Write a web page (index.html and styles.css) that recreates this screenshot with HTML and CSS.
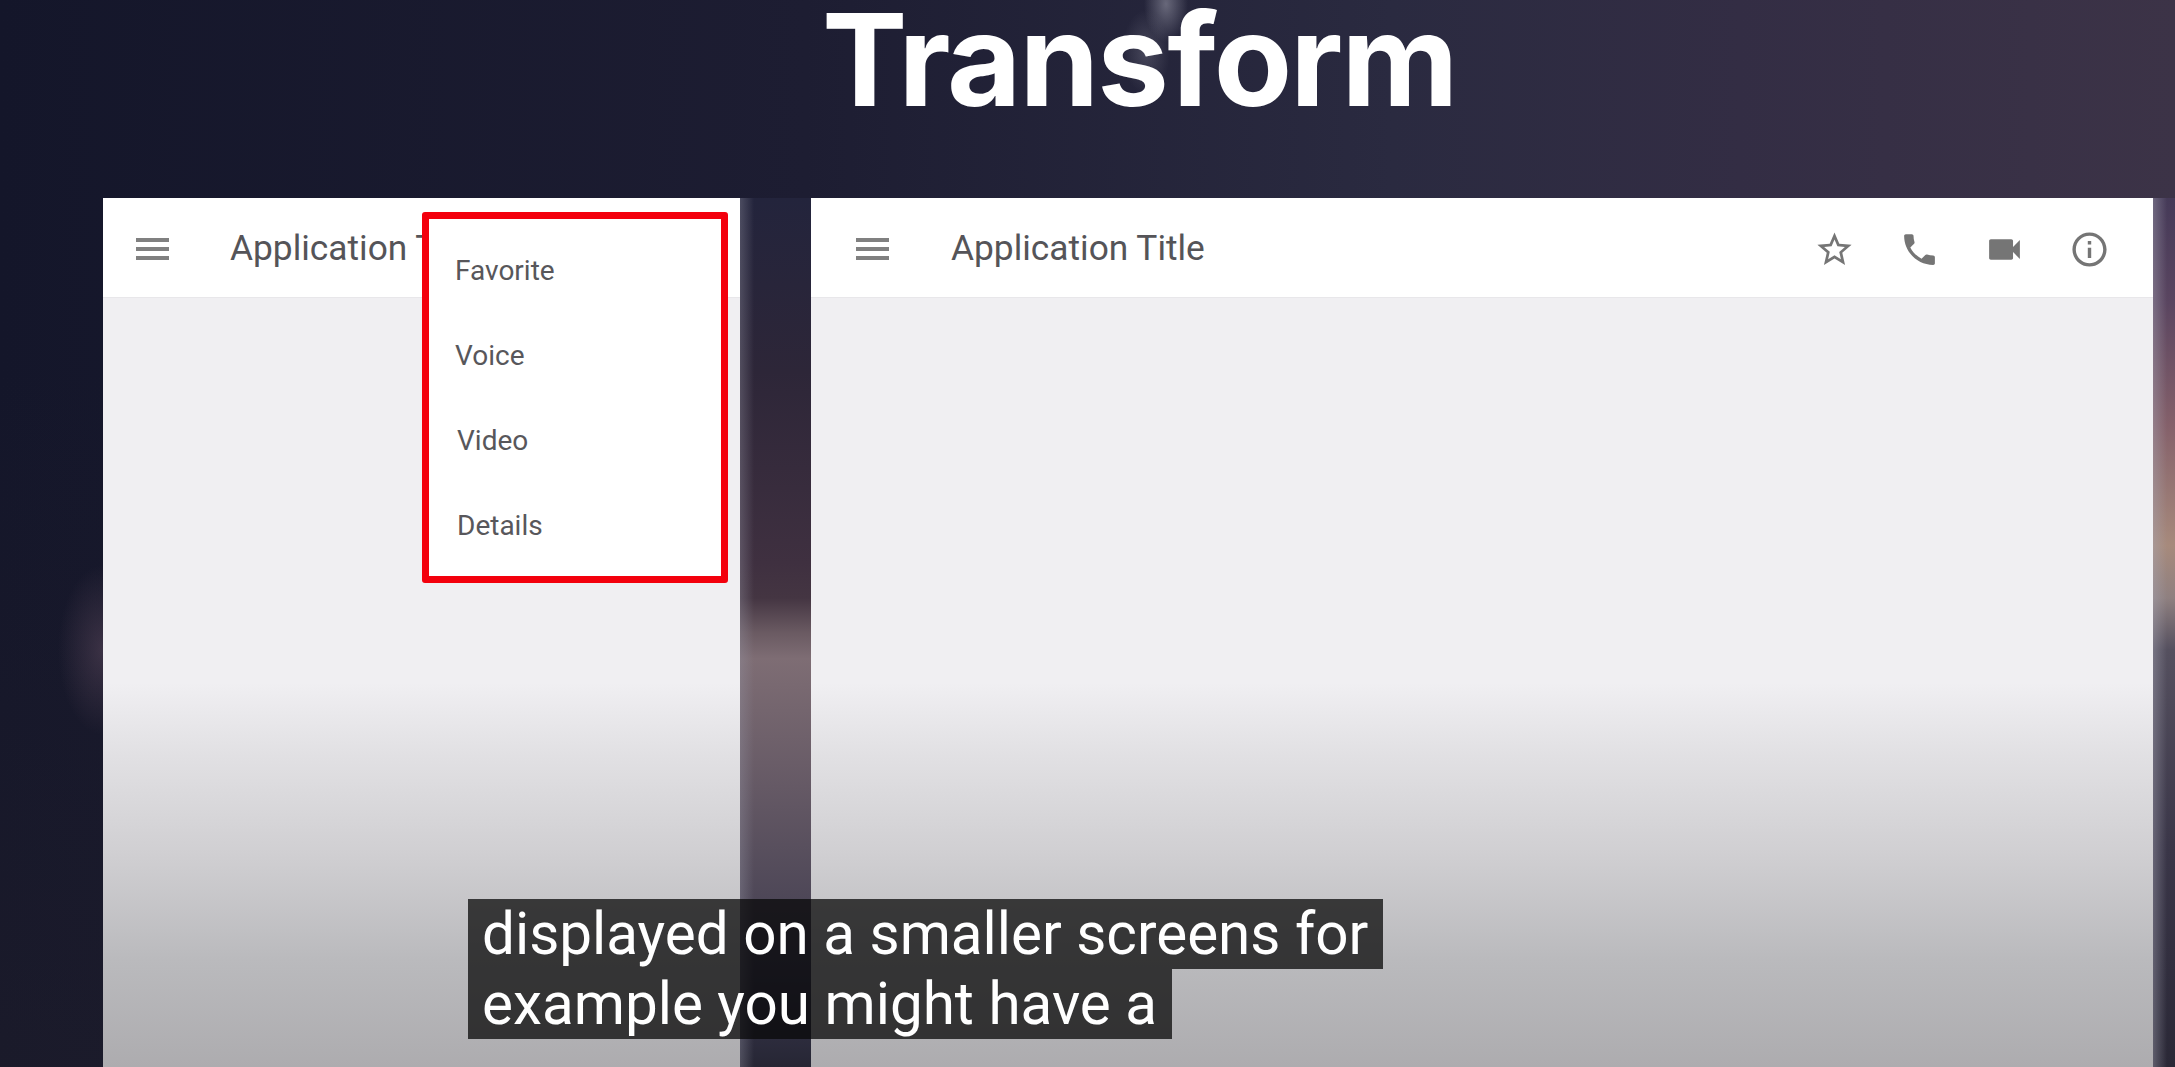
FILE: index.html
```html
<!DOCTYPE html>
<html lang="en">
<head>
  <meta charset="UTF-8">
  <meta name="viewport" content="width=device-width, initial-scale=1.0">
  <title>Transform</title>
  <link rel="stylesheet" href="styles.css">
</head>
<body>

<h1 class="slide-title">Transform</h1>

<main class="screens">
  <!-- Small screen: actions moved into the overflow menu -->
  <section class="screen screen-small">
    <header class="app-bar">
      <svg class="menu-icon" viewBox="0 0 33 22"><rect width="33" height="4"/><rect y="9" width="33" height="4"/><rect y="18" width="33" height="4"/></svg>
      <span class="app-title">Application Title</span>
    </header>
    <div class="app-body"></div>
    <ul class="overflow-menu">
      <li>Favorite</li>
      <li>Voice</li>
      <li class="nudged">Video</li>
      <li class="nudged">Details</li>
    </ul>
  </section>

  <div class="gutter"></div>

  <!-- Large screen: actions in the app bar -->
  <section class="screen screen-large">
    <header class="app-bar">
      <svg class="menu-icon" viewBox="0 0 33 22"><rect width="33" height="4"/><rect y="9" width="33" height="4"/><rect y="18" width="33" height="4"/></svg>
      <span class="app-title">Application Title</span>
      <div class="actions">
        <svg viewBox="0 0 24 24"><path d="M22 9.24l-7.19-.62L12 2 9.19 8.63 2 9.24l5.46 4.73L5.82 21 12 17.27 18.18 21l-1.63-7.03L22 9.24zM12 15.4l-3.76 2.27 1-4.28-3.32-2.88 4.38-.38L12 6.1l1.71 4.04 4.38.38-3.32 2.88 1 4.28L12 15.4z"/></svg>
        <svg viewBox="0 0 24 24"><path d="M6.62 10.79c1.44 2.83 3.76 5.14 6.59 6.59l2.2-2.2c.27-.27.67-.36 1.02-.24 1.12.37 2.33.57 3.57.57.55 0 1 .45 1 1V20c0 .55-.45 1-1 1-9.39 0-17-7.61-17-17 0-.55.45-1 1-1h3.5c.55 0 1 .45 1 1 0 1.25.2 2.45.57 3.57.11.35.03.74-.25 1.02l-2.2 2.2z"/></svg>
        <svg viewBox="0 0 24 24"><path d="M17 10.5V7c0-.55-.45-1-1-1H4c-.55 0-1 .45-1 1v10c0 .55.45 1 1 1h12c.55 0 1-.45 1-1v-3.5l4 4v-11l-4 4z"/></svg>
        <svg viewBox="0 0 24 24"><path d="M11 17h2v-6h-2v6zm1-15C6.48 2 2 6.48 2 12s4.48 10 10 10 10-4.48 10-10S17.52 2 12 2zm0 18c-4.41 0-8-3.59-8-8s3.59-8 8-8 8 3.59 8 8-3.59 8-8 8zM11 9h2V7h-2v2z"/></svg>
      </div>
    </header>
    <div class="app-body"></div>
  </section>

  <div class="edge"></div>
</main>

<p class="caption">
  <span>displayed on a smaller screens for</span>
  <span>example you might have a</span>
</p>

</body>
</html>
```

FILE: styles.css
```css
html, body {
  margin: 0;
  height: 100%;
}

body {
  position: relative;
  display: flex;
  flex-direction: column;
  height: 100vh;
  overflow: hidden;
  font-family: 'Roboto', sans-serif;
  background-color: #17182c;
  background-image:
    radial-gradient(ellipse 22px 38px at 1166px 4px, rgba(170, 170, 185, 0.5), rgba(170, 170, 185, 0) 100%),
    radial-gradient(ellipse 24px 42px at 1146px 52px, rgba(150, 150, 165, 0.3), rgba(150, 150, 165, 0) 100%),
    radial-gradient(ellipse 45px 85px at 103px 650px, rgba(95, 75, 95, 0.5), rgba(95, 75, 95, 0) 100%),
    linear-gradient(to bottom, rgba(38, 34, 42, 0) 35%, rgba(38, 34, 42, 0.35) 100%),
    linear-gradient(to right, #14162a 0%, #1d1d32 37%, #2a2a40 64%, #332d44 80%, #3c3347 100%);
}

.slide-title {
  flex: none;
  height: 198px;
  margin: 0 0 0 822px;
  font-family: 'Inter', sans-serif;
  font-size: 128px;
  font-weight: 700;
  letter-spacing: -1.8px;
  line-height: 120px;
  color: #fff;
}

.screens {
  flex: 1;
  display: flex;
  min-height: 0;
  padding-left: 103px;
}

.screen {
  position: relative;
  display: flex;
  flex-direction: column;
}

.screen-small {
  width: 637px;
}

.screen-large {
  width: 1342px;
}

.gutter {
  width: 71px;
  background-image:
    linear-gradient(to right, rgba(150, 150, 165, 0.35), rgba(150, 150, 165, 0) 14px),
    linear-gradient(to bottom, #23243c 0%, #2d2638 20%, #3f3040 42%, #443542 46%, #6a5a62 50%, #7e6d74 53%, #6a5d68 65%, #4f4858 80%, #3d3a52 89%, #262634 100%);
}

.edge {
  flex: 1;
  background-image:
    linear-gradient(to right, rgba(170, 170, 185, 0.4), rgba(170, 170, 185, 0) 14px),
    linear-gradient(to bottom, #453a58 0%, #5a4560 12%, #84606a 26%, #a78a7c 40%, #8f8080 46%, #55505f 52%, #3a3648 75%, #2a2836 100%);
}

.app-bar {
  flex: none;
  display: flex;
  align-items: center;
  height: 100px;
  padding-top: 3px;
  background-color: #fff;
  border-bottom: 1px solid #e8e7ea;
  box-sizing: border-box;
}

.screen-small .app-bar {
  padding-left: 33px;
}

.screen-large .app-bar {
  padding-left: 45px;
  padding-right: 43px;
}

.menu-icon {
  flex: none;
  width: 33px;
  height: 22px;
  fill: #808080;
}

.app-title {
  margin-left: 61px;
  font-size: 35.3px;
  line-height: 1;
  color: #555458;
  white-space: nowrap;
}

.screen-large .app-title {
  margin-left: 62px;
}

.actions {
  display: flex;
  gap: 44px;
  margin-left: auto;
}

.actions svg {
  display: block;
  width: 41px;
  height: 41px;
  fill: #757575;
}

.app-body {
  flex: 1;
  background-image: linear-gradient(to bottom, #f0eff2 0%, #f0eff2 50%, #e2e1e4 59%, #cfced1 73%, #bababd 86%, #adacaf 100%);
}

.overflow-menu {
  position: absolute;
  top: 14px;
  left: 319px;
  width: 306px;
  height: 371px;
  margin: 0;
  padding: 9px 0 0 26px;
  box-sizing: border-box;
  list-style: none;
  background-color: #fff;
  border: 7px solid #f3000d;
  border-radius: 3px;
}

.overflow-menu li {
  height: 85px;
  font-size: 28px;
  line-height: 85px;
  color: #58575b;
}

.overflow-menu .nudged {
  padding-left: 2px;
}

.caption {
  position: absolute;
  top: 899px;
  left: 468px;
  margin: 0;
  font-size: 58.4px;
  line-height: 70px;
  color: #fff;
}

.caption span {
  display: table;
  padding: 0 15px 0 14px;
  background-color: rgba(8, 8, 8, 0.75);
}
```
